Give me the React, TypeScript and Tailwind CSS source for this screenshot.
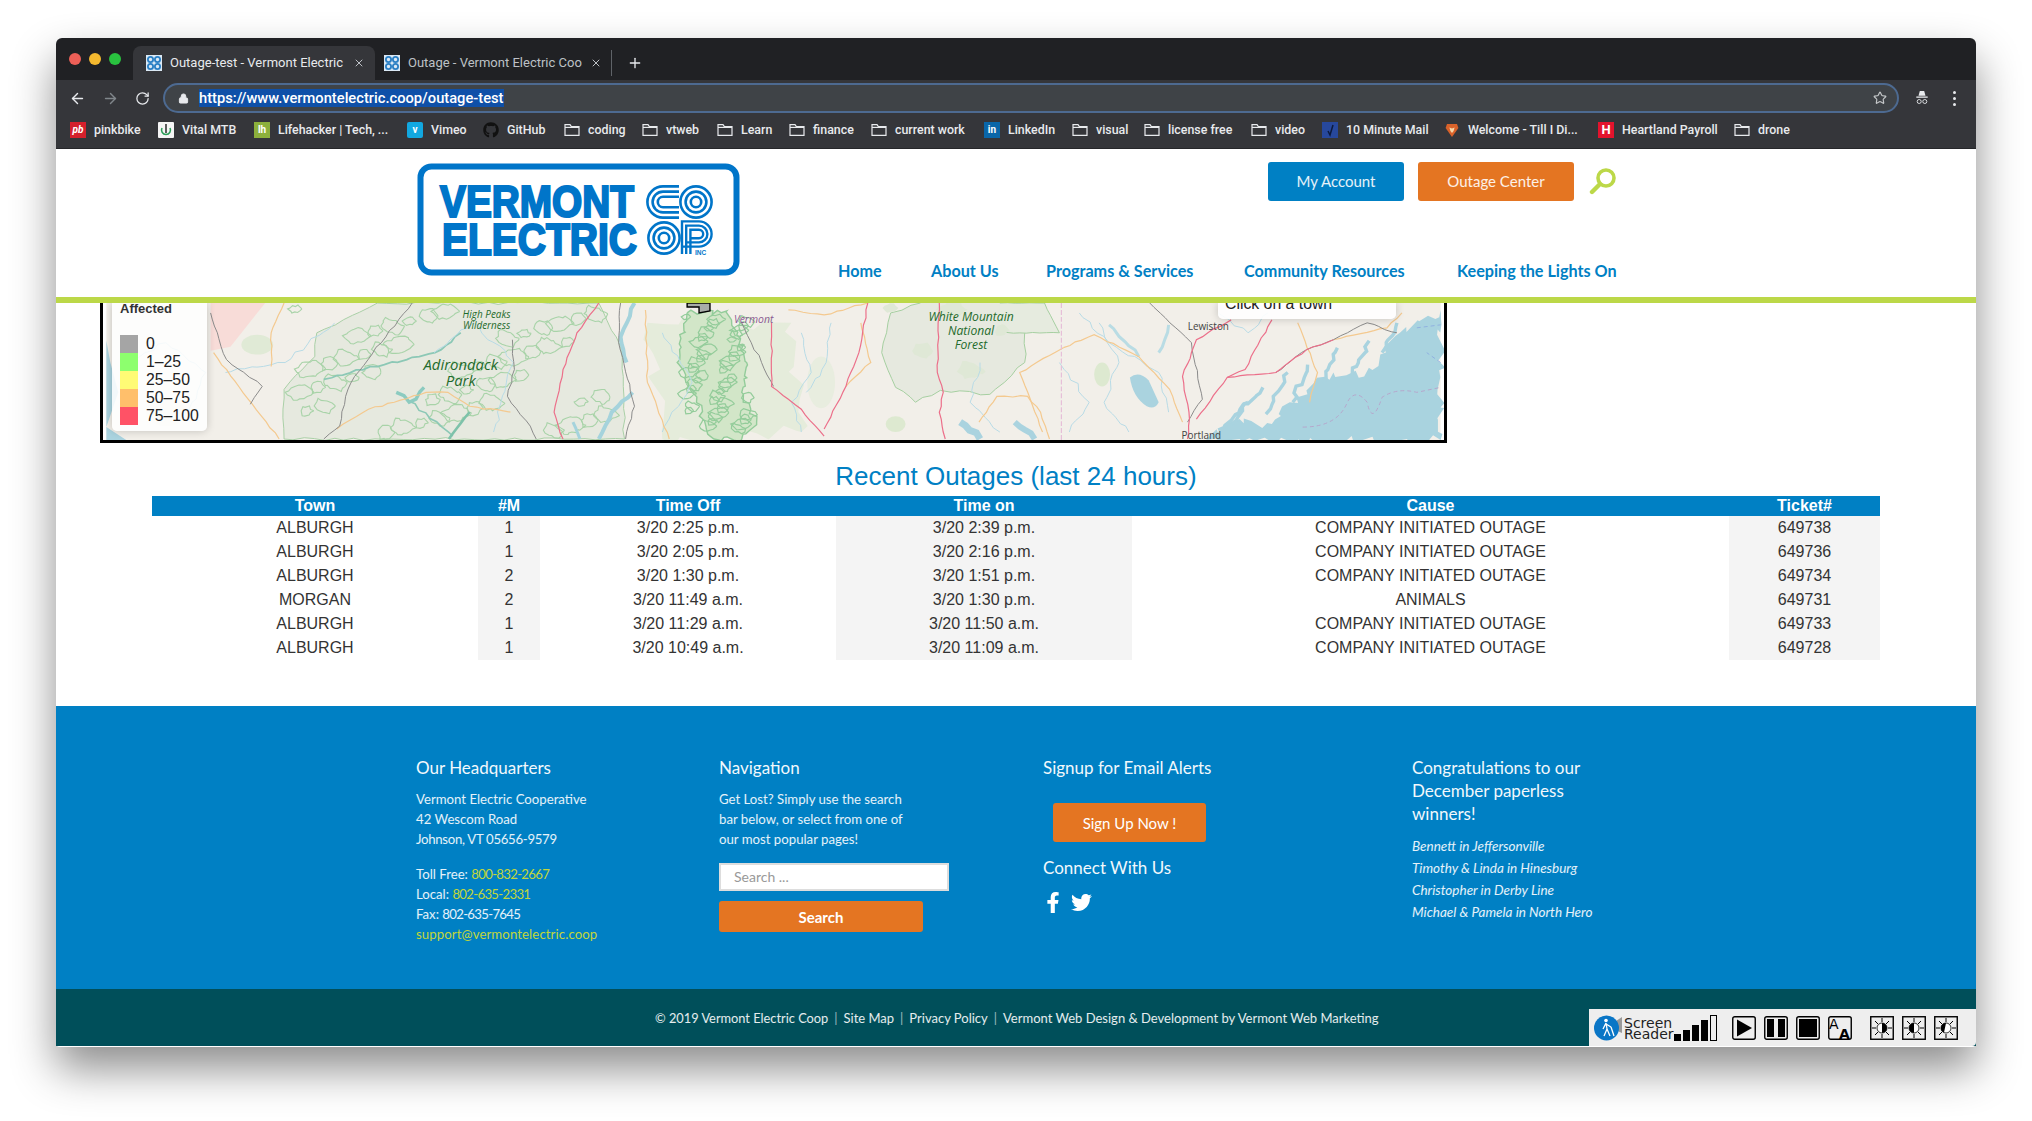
import React from "react";
import { ArrowLeft, ArrowRight, RotateCw, Lock, Star, Plus, X } from "lucide-react";
import { FaFacebookF, FaTwitter, FaGithub } from "react-icons/fa";

const SANS = "font-['Lato','Noto_Sans',sans-serif]";

const rows = [
  ["ALBURGH", "1", "3/20 2:25 p.m.", "3/20 2:39 p.m.", "COMPANY INITIATED OUTAGE", "649738"],
  ["ALBURGH", "1", "3/20 2:05 p.m.", "3/20 2:16 p.m.", "COMPANY INITIATED OUTAGE", "649736"],
  ["ALBURGH", "2", "3/20 1:30 p.m.", "3/20 1:51 p.m.", "COMPANY INITIATED OUTAGE", "649734"],
  ["MORGAN", "2", "3/20 11:49 a.m.", "3/20 1:30 p.m.", "ANIMALS", "649731"],
  ["ALBURGH", "1", "3/20 11:29 a.m.", "3/20 11:50 a.m.", "COMPANY INITIATED OUTAGE", "649733"],
  ["ALBURGH", "1", "3/20 10:49 a.m.", "3/20 11:09 a.m.", "COMPANY INITIATED OUTAGE", "649728"],
];

function randomFrom(seed: number) {
  let s = seed * 7919 + 13;
  return () => {
    s = (s * 16807) % 2147483647;
    return (s % 1000) / 1000;
  };
}

// jagged line between the points, so park edges and roads look hand traced
function wiggle(pts: number[][], amp: number, seed = 1, step = 7) {
  const r = randomFrom(seed);
  const rnd = () => r() * 2 - 1;
  let d = `M${pts[0][0]} ${pts[0][1]}`;
  for (let i = 1; i < pts.length; i++) {
    const [x0, y0] = pts[i - 1];
    const [x1, y1] = pts[i];
    const n = Math.max(1, Math.round(Math.hypot(x1 - x0, y1 - y0) / step));
    for (let k = 1; k <= n; k++) {
      const t = k / n;
      const j = k === n ? 0 : amp;
      d += `L${(x0 + (x1 - x0) * t + rnd() * j).toFixed(1)} ${(y0 + (y1 - y0) * t + rnd() * j).toFixed(1)}`;
    }
  }
  return d;
}

// scatter of small closed outlines (parcels of state land), spread evenly over the box
function parcels(count: number, x0: number, x1: number, y0: number, y1: number, size: number, seed: number) {
  const out: string[] = [];
  for (let i = 0; i < count; i++) {
    const cx = x0 + ((i * 0.618034 + seed * 0.13) % 1) * (x1 - x0);
    const cy = y0 + ((i * 0.754878 + seed * 0.07) % 1) * (y1 - y0);
    const rad = size * (0.6 + ((i * 37) % 10) / 12);
    const pts: number[][] = [];
    const sides = 6;
    for (let k = 0; k <= sides; k++) {
      const a = ((k % sides) / sides) * Math.PI * 2;
      const rr = rad * (k % sides === 0 ? 1 : 0.6 + ((i * 7 + k * 13) % 10) / 20);
      pts.push([cx + Math.cos(a) * rr * 1.3, cy + Math.sin(a) * rr]);
    }
    out.push(wiggle(pts, 1.4, seed + i + 1, 3.5));
  }
  return out;
}

const greyRoads = [
  [[105, 10], [121, 57], [157, 84], [145, 102]],
  [[308, 0], [277, 40], [250, 74], [241, 94], [235, 124], [219, 137]],
  [[409, 37], [411, 67], [404, 94], [427, 124], [433, 137]],
  [[518, 0], [516, 40], [532, 104], [523, 137]],
  [[1051, 0], [1093, 40], [1104, 97], [1089, 120]],
  [[1178, 70], [1209, 47], [1236, 37], [1270, 20], [1300, 30]],
  [[640, 20], [660, 60], [672, 84]],
];
const pinkRoads = [
  [[496, 0], [474, 30], [460, 67], [451, 110], [460, 137]],
  [[670, 20], [670, 84], [687, 97], [700, 107], [723, 134]],
  [[767, 0], [758, 50], [745, 84], [723, 127]],
  [[839, 0], [837, 70], [843, 90], [839, 110], [845, 137]],
  [[1133, 17], [1098, 37], [1084, 74], [1091, 117], [1089, 137]],
  [[1174, 17], [1147, 67], [1129, 75], [1098, 117]],
  [[1129, 75], [1178, 70], [1209, 47], [1236, 37]],
];
const orangeRoads = [
  [[964, 45], [995, 32], [1040, 54], [1071, 87], [1084, 120]],
  [[879, 120], [897, 94], [928, 94], [941, 110], [950, 137]],
  [[687, 7], [723, 12], [767, 0]],
  [[543, 7], [545, 80], [567, 137]],
  [[232, 127], [264, 107], [290, 100], [322, 90], [344, 90], [366, 104], [407, 110]],
  [[166, 64], [166, 30], [179, 0]],
  [[108, 50], [143, 97], [174, 137]],
  [[964, 45], [937, 60], [920, 70], [943, 130]],
  [[1200, 20], [1220, 70], [1212, 100]],
  [[1236, 37], [1290, 25], [1305, 10]],
  [[745, 84], [770, 60], [760, 20]],
];
const blueLines = [
  [[120, 70], [180, 60], [230, 20]],
  [[20, 60], [60, 40], [100, 70], [80, 120]],
  [[330, 50], [370, 20], [410, 60], [390, 130]],
  [[560, 30], [590, 80], [560, 130]],
  [[700, 30], [710, 70], [690, 100], [700, 130]],
  [[730, 20], [725, 60], [705, 90]],
  [[880, 60], [870, 100], [900, 130]],
  [[1000, 20], [1020, 60], [1005, 100], [1030, 130]],
  [[960, 60], [990, 100], [970, 130]],
  [[980, 10], [1010, 40], [1060, 70], [1070, 110]],
  [[1120, 10], [1150, 30], [1170, 10]],
];

const adirondackParcels = parcels(52, 190, 510, 6, 132, 9, 100);
const forestParcels = parcels(48, 584, 648, 14, 130, 6, 300);
const whiteMtnParcels = parcels(5, 790, 920, 5, 90, 10, 500);
const inlets = [
  [[1165, 85], [1130, 125]],
  [[1190, 70], [1168, 112]],
  [[1210, 62], [1195, 100]],
  [[1240, 45], [1225, 80]],
  [[1272, 38], [1255, 72]],
  [[1300, 20], [1285, 50]],
  [[1150, 100], [1120, 128]],
];

function MapArt() {
  return (
    <svg viewBox="0 0 1344 138" className="block w-full h-full">
      <rect width="1344" height="138" fill="#f2efe9" />
      {/* lake on the far left */}
      <path d="M0 38 L4 60 L12 90 L0 125 L20 138 L0 138Z" fill="#aad3df" />
      {/* hatched reserve */}
      <path d="M105 0H160L125 44L105 48Z" fill="#f8dcd8" />
      {/* light woods */}
      <ellipse cx="152" cy="42" rx="16" ry="10" fill="#e0ead6" />
      <ellipse cx="60" cy="110" rx="20" ry="14" fill="#e8ecdd" />
      <path d={wiggle([[545, 20], [690, 20], [700, 130], [560, 137], [545, 20]], 8, 201, 12)} fill="#e5ecdb" />
      <ellipse cx="720" cy="80" rx="14" ry="26" fill="#e8eddf" />
      <ellipse cx="1003" cy="72" rx="8" ry="12" fill="#dde9d0" />
      <ellipse cx="795" cy="122" rx="10" ry="8" fill="#dde9d0" />
      {/* park areas */}
      <path
        d={wiggle([[179, 137], [179, 87], [210, 54], [212, 30], [273, 0], [496, 0], [518, 44], [522, 137], [179, 137]], 1.5, 3, 10)}
        fill="#e6e9df"
        stroke="#a9d0a6"
        strokeWidth="1"
      />
      <path
        d={wiggle([[820, 0], [790, 10], [781, 50], [795, 85], [815, 100], [840, 88], [890, 92], [925, 60], [925, 30], [945, 0]], 1.5, 5, 10)}
        fill="#e6e9df"
        stroke="#a5cfa0"
        strokeWidth="1"
      />
      <path d={wiggle([[900, 0], [945, 0], [960, 30], [900, 30]], 0.5, 5)} fill="#e6ebdf" stroke="#a5cfa0" />
      {adirondackParcels.map((d, i) => (
        <path key={i} d={d} fill="none" stroke="#a8d3a8" strokeWidth="1.1" />
      ))}
      {whiteMtnParcels.map((d, i) => (
        <path key={i} d={d} fill="#dfe8d6" stroke="none" />
      ))}
      <path d={wiggle([[585, 10], [625, 8], [645, 60], [640, 90], [655, 120], [640, 137], [612, 137], [590, 90], [575, 60], [585, 10]], 3, 31, 4)} fill="#d2e6c8" stroke="#93cc9a" strokeWidth="1.4" />
      {forestParcels.map((d, i) => (
        <path key={i} d={d} fill="none" stroke="#93cc9a" strokeWidth="1.2" />
      ))}
      <path d={wiggle([[219, 77], [280, 62], [331, 50], [357, 30]], 1.5, 7)} stroke="#8cc8b6" strokeWidth="1.8" fill="none" />
      <path d={wiggle([[300, 94], [349, 134]], 1.5, 8)} stroke="#8cc8b6" strokeWidth="1.6" fill="none" />
      <path d={wiggle([[366, 110], [345, 137]], 1, 9)} stroke="#7ec2aa" strokeWidth="2.6" fill="none" />
      <path d={wiggle([[292, 90], [305, 100], [320, 85]], 2, 10)} stroke="#8ccbc0" strokeWidth="3.4" fill="none" />
      {/* lake champlain */}
      <path d={wiggle([[532, 0], [518, 34], [524, 60]], 1, 12)} stroke="#a5d3dc" strokeWidth="4" fill="none" />
      <path d={wiggle([[530, 90], [509, 110], [496, 137]], 1, 13)} stroke="#a5d3dc" strokeWidth="4" fill="none" />
      <path d={wiggle([[470, 120], [477, 137]], 1, 13)} stroke="#a5d3dc" strokeWidth="3" fill="none" />
      {/* maine lakes */}
      <path d="M1031 75 Q1040 68 1050 78 L1060 100 Q1056 108 1048 104 Q1034 95 1031 75Z" fill="#aad3df" />
      <path d={wiggle([[1010, 22], [1040, 54]], 1.5, 14)} stroke="#b9dce4" strokeWidth="3" fill="none" />
      <path d={wiggle([[1070, 22], [1060, 50]], 1.5, 15)} stroke="#b9dce4" strokeWidth="3" fill="none" />
      <path d={wiggle([[860, 120], [880, 137]], 2, 16)} stroke="#aad3df" strokeWidth="7" fill="none" />
      <path d={wiggle([[915, 120], [935, 137]], 2, 17)} stroke="#aad3df" strokeWidth="6" fill="none" />
      {/* sea */}
      <path
        d={wiggle([[1344, 7], [1303, 30], [1267, 74], [1236, 70], [1192, 100], [1174, 122], [1133, 120], [1108, 138], [1344, 138], [1344, 7]], 5, 19, 6)}
        fill="#a9d3df"
      />
      {inlets.map((p, i) => (
        <path key={i} d={wiggle(p, 2.5, i + 81, 5)} stroke="#a9d3df" strokeWidth="3.4" fill="none" />
      ))}
      <path d="M1205 125 Q1240 125 1250 100 Q1258 85 1270 100 Q1275 125 1285 95 Q1300 85 1320 90 L1344 85" fill="none" stroke="#b5a6cc" strokeWidth="1" strokeDasharray="4 3" />
      <path d="M1320 25 L1344 22 M1344 60 L1330 50" fill="none" stroke="#8fb0e0" strokeWidth="1" strokeDasharray="4 3" />
      {/* roads */}
      {blueLines.map((p, i) => (
        <path key={i} d={wiggle(p, 2, i + 41)} fill="none" stroke="#b7dbe6" strokeWidth="1" />
      ))}
      {orangeRoads.map((p, i) => (
        <path key={i} d={wiggle(p, 0.8, i + 51)} fill="none" stroke="#f4c98f" strokeWidth="1.2" />
      ))}
      {greyRoads.map((p, i) => (
        <path key={i} d={wiggle(p, 1, i + 61)} fill="none" stroke="#8a8a8a" strokeWidth="1" />
      ))}
      {pinkRoads.map((p, i) => (
        <path key={i} d={wiggle(p, 0.8, i + 71)} fill="none" stroke="#ec6f8a" strokeWidth="1.2" />
      ))}
      <path d="M962 0V138" stroke="#e6bfd8" strokeWidth="1.2" strokeDasharray="5 2" />
      {/* service town */}
      <path d="M585 0 L585 4 L597 4 L597 10 L608 8 L608 0Z" fill="#a8aca8" stroke="#000" strokeWidth="1.4" />
      {/* labels */}
      <g fontFamily="'Open Sans','Noto Sans',sans-serif" fontStyle="italic" textAnchor="middle" fill="#1f6b2c">
        <text x="383" y="15" fontSize="10">High Peaks</text>
        <text x="383" y="26" fontSize="10">Wilderness</text>
        <text x="357" y="67" fontSize="15">Adirondack</text>
        <text x="357" y="84" fontSize="15">Park</text>
        <text x="871" y="18" fontSize="12.2">White Mountain</text>
        <text x="871" y="32" fontSize="12.2">National</text>
        <text x="871" y="46" fontSize="12.2">Forest</text>
        <text x="652" y="20" fontSize="10.5" fill="#8a5a92">Vermont</text>
      </g>
      <g fontFamily="'Open Sans','Noto Sans',sans-serif" fontSize="10" textAnchor="middle" fill="#444">
        <text x="1110" y="27">Lewiston</text>
        <text x="1103" y="137">Portland</text>
      </g>
    </svg>
  );
}

function Logo() {
  const blue = "#0075c9";
  // concentric strokes of the CO OP mark
  const rings = (cx: number, cy: number) =>
    [15.6, 10.4, 5.2].map((r) => <circle key={r} cx={cx} cy={cy} r={r} fill="none" stroke={blue} strokeWidth="2.6" />);
  const cee = (cx: number, cy: number) =>
    [15.6, 10.4, 5.2].map((r) => (
      <path key={r} d={`M${cx + 16} ${cy - r}H${cx}A${r} ${r} 0 0 0 ${cx} ${cy + r}H${cx + 16}`} fill="none" stroke={blue} strokeWidth="2.6" />
    ));
  const pee = [12.6, 8.4, 4.2].map((r) => (
    <path key={r} d={`M${277.6 - r} 91V${71 - r}H282A${r} ${r} 0 0 1 282 ${71 + r}H${277.6 - r}`} fill="none" stroke={blue} strokeWidth="2.4" />
  ));
  return (
    <svg viewBox="0 0 323 113" className="w-[323px] h-[113px] block">
      <rect x="3.5" y="3.5" width="316" height="106" rx="11" fill="#fff" stroke={blue} strokeWidth="6" />
      <g fontFamily="'Liberation Sans',Arial,sans-serif" fontWeight="700" fill={blue} stroke={blue} strokeWidth="2.2">
        <text x="23" y="54" fontSize="44" textLength="194" lengthAdjust="spacingAndGlyphs">VERMONT</text>
        <text x="25" y="92" fontSize="44" textLength="195" lengthAdjust="spacingAndGlyphs">ELECTRIC</text>
      </g>
      {cee(246, 39)}
      {rings(279, 39)}
      {rings(247, 75)}
      {pee}
      <text x="278" y="92" fontSize="6.5" fontWeight="700" fontFamily="'Liberation Sans',sans-serif" fill={blue}>INC</text>
    </svg>
  );
}

function TabIcon() {
  return (
    <svg viewBox="0 0 16 16" className="w-4 h-4 shrink-0">
      <rect width="16" height="16" fill="#dbe9f5" />
      {[[4.5, 4.5], [11.5, 4.5], [4.5, 11.5], [11.5, 11.5]].map(([x, y], i) => (
        <circle key={i} cx={x} cy={y} r="2.6" fill="none" stroke="#2a7fc4" strokeWidth="1.8" />
      ))}
    </svg>
  );
}

function FolderIcon() {
  return (
    <svg viewBox="0 0 16 14" className="w-4 h-[14px] shrink-0" fill="none" stroke="#e8eaed" strokeWidth="1.2">
      <path d="M1 12.4V1.6h5l1.4 2H15v8.8z" />
      <path d="M1 4.4h14" />
    </svg>
  );
}

function Mark({ bg, text, className = "" }: { bg: string; text: string; className?: string }) {
  return (
    <span className={`w-4 h-4 shrink-0 flex items-center justify-center text-white text-[10px] font-bold leading-none ${bg} ${className}`}>
      {text}
    </span>
  );
}

const bookmarks: { label: string; icon: React.ReactNode; width: string }[] = [
  { label: "pinkbike", width: "w-[88px]", icon: <Mark bg="bg-[#d4202c]" text="pb" className="italic" /> },
  {
    label: "Vital MTB",
    width: "w-[96px]",
    icon: (
      <svg viewBox="0 0 16 16" className="w-4 h-4 shrink-0">
        <rect width="16" height="16" rx="1" fill="#f5f5f5" />
        <path d="M4 6a4.5 4.5 0 1 0 8 0" fill="none" stroke="#2a9d58" strokeWidth="1.6" />
        <path d="M8 2v9" stroke="#1d1d1d" strokeWidth="1.4" />
      </svg>
    ),
  },
  { label: "Lifehacker | Tech, ...", width: "w-[153px]", icon: <Mark bg="bg-[#8cb03c]" text="lh" /> },
  { label: "Vimeo", width: "w-[76px]", icon: <Mark bg="bg-[#12a8e0] rounded-[2px]" text="v" /> },
  { label: "GitHub", width: "w-[81px]", icon: <FaGithub className="w-4 h-4 shrink-0 text-[#111]" /> },
  { label: "coding", width: "w-[78px]", icon: <FolderIcon /> },
  { label: "vtweb", width: "w-[75px]", icon: <FolderIcon /> },
  { label: "Learn", width: "w-[72px]", icon: <FolderIcon /> },
  { label: "finance", width: "w-[82px]", icon: <FolderIcon /> },
  { label: "current work", width: "w-[113px]", icon: <FolderIcon /> },
  { label: "LinkedIn", width: "w-[88px]", icon: <Mark bg="bg-[#0a66a8]" text="in" /> },
  { label: "visual", width: "w-[72px]", icon: <FolderIcon /> },
  { label: "license free", width: "w-[107px]", icon: <FolderIcon /> },
  { label: "video", width: "w-[71px]", icon: <FolderIcon /> },
  {
    label: "10 Minute Mail",
    width: "w-[122px]",
    icon: (
      <svg viewBox="0 0 16 16" className="w-4 h-4 shrink-0">
        <rect width="16" height="16" fill="#27489c" />
        <path d="M6 9l2 4 3-10" fill="none" stroke="#0c1a3d" strokeWidth="1.5" />
      </svg>
    ),
  },
  {
    label: "Welcome - Till I Di...",
    width: "w-[154px]",
    icon: (
      <svg viewBox="0 0 16 16" className="w-4 h-4 shrink-0">
        <path d="M3 2h10l1.4 4L8 15 1.6 6z" fill="#d9622a" />
        <path d="M5.4 5.4l2.6 1 2.6-1L9.6 9 8 11 6.4 9z" fill="#f6d6a8" />
      </svg>
    ),
  },
  { label: "Heartland Payroll", width: "w-[136px]", icon: <Mark bg="bg-[#e3132d]" text="H" className="text-[13px]" /> },
  { label: "drone", width: "w-[60px]", icon: <FolderIcon /> },
];

function BrowserChrome() {
  return (
    <div className="font-['Roboto',sans-serif] text-[#e8eaed]">
      <div className="h-[42px] bg-[#202124] rounded-t-[6px] flex items-end">
        <div className="flex items-center gap-2 pl-[13px] w-[77px] h-full pb-[1px]">
          <span className="w-3 h-3 rounded-full bg-[#ed5f57]" />
          <span className="w-3 h-3 rounded-full bg-[#f4b92f]" />
          <span className="w-3 h-3 rounded-full bg-[#29c23f]" />
        </div>
        <div className="w-[242px] h-[34px] bg-[#35363a] rounded-t-[8px] flex items-center pl-[13px] pr-[10px] gap-2">
          <TabIcon />
          <span className="flex-1 text-[13px] whitespace-nowrap overflow-hidden">Outage-test - Vermont Electric</span>
          <X className="w-3 h-3 text-[#bdc1c6]" />
        </div>
        <div className="w-[237px] h-[26px] flex items-center pl-[9px] pr-[9px] gap-2 border-r border-[#5f6368] mb-[4px]">
          <TabIcon />
          <span className="flex-1 text-[13px] whitespace-nowrap overflow-hidden text-[#bdc1c6]">Outage - Vermont Electric Coop</span>
          <X className="w-3 h-3 text-[#bdc1c6]" />
        </div>
        <Plus className="w-4 h-4 ml-[15px] mb-[9px] text-[#e8eaed]" />
      </div>
      <div className="h-[38px] bg-[#35363a] flex items-center pb-[2px]">
        <div className="w-[107px] flex items-center pl-[13px] gap-[16px]">
          <ArrowLeft className="w-[17px] h-[17px]" />
          <ArrowRight className="w-[17px] h-[17px] text-[#80868b]" />
          <RotateCw className="w-[15px] h-[15px]" />
        </div>
        <div className="w-[1736px] h-[30px] rounded-full bg-[#3f4347] border-2 border-[#4d6a91] flex items-center pl-[13px] pr-[10px]">
          <Lock className="w-[11px] h-[11px] fill-[#e8eaed] text-[#e8eaed]" />
          <span className="ml-[10px] bg-[#0f50a8] text-white text-[14.7px] font-medium leading-[18px] whitespace-nowrap">
            https://www.vermontelectric.coop/outage-test
          </span>
          <Star className="w-[14px] h-[14px] ml-auto text-[#c4c7c9]" />
        </div>
        <svg viewBox="0 0 16 18" className="w-[14px] h-[16px] ml-[16px]" fill="none" stroke="#e8eaed">
          <path d="M4 6.5L5.5 1h5L12 6.5z" fill="#e8eaed" stroke="none" />
          <path d="M1.5 8h13" strokeWidth="1.5" />
          <circle cx="4.8" cy="13" r="2.3" />
          <circle cx="11.2" cy="13" r="2.3" />
        </svg>
        <div className="flex flex-col gap-[3px] ml-[24px]">
          <span className="w-[3px] h-[3px] rounded-full bg-[#e8eaed]" />
          <span className="w-[3px] h-[3px] rounded-full bg-[#e8eaed]" />
          <span className="w-[3px] h-[3px] rounded-full bg-[#e8eaed]" />
        </div>
      </div>
      <div className="h-[31px] bg-[#35363a] border-b border-[#26272a] flex items-center pb-[6px] pl-[14px] text-[12.4px] font-medium">
        {bookmarks.map((b) => (
          <div key={b.label} className={`flex items-center gap-2 shrink-0 ${b.width}`}>
            {b.icon}
            <span className="whitespace-nowrap">{b.label}</span>
          </div>
        ))}
      </div>
    </div>
  );
}

function SiteHeader() {
  const nav = [
    ["Home", "w-[93px]"],
    ["About Us", "w-[115px]"],
    ["Programs & Services", "w-[198px]"],
    ["Community Resources", "w-[213px]"],
    ["Keeping the Lights On", ""],
  ];
  return (
    <div className="h-[154px] bg-white border-b-[6px] border-[#bcd848] flex">
      <div className="pl-[361px] pt-[14px] w-[782px]">
        <Logo />
      </div>
      <div className={`${SANS}`}>
        <div className="flex items-center pt-[13px] pl-[430px]">
          <a className="w-[136px] h-[39px] rounded-[3px] bg-[#0080c4] text-white/90 text-[15px] flex items-center justify-center">My Account</a>
          <a className="w-[156px] h-[39px] rounded-[3px] bg-[#e47522] text-white/90 text-[15px] flex items-center justify-center ml-[14px]">Outage Center</a>
          <svg viewBox="0 0 28 28" className="w-[28px] h-[28px] ml-[15px] mt-[-1px]" fill="none" stroke="#bcd848">
            <circle cx="17" cy="11" r="8" strokeWidth="3.6" />
            <path d="M11 17L3 25" strokeWidth="4.4" strokeLinecap="round" />
          </svg>
        </div>
        <div className="flex mt-[58px] text-[16.2px] font-bold text-[#0080c4] leading-6 whitespace-nowrap">
          {nav.map(([n, w]) => (
            <span key={n} className={`shrink-0 ${w}`}>{n}</span>
          ))}
        </div>
      </div>
    </div>
  );
}

function MapPanel() {
  const legend = [
    ["0", "bg-[#a5a5a5]"],
    ["1–25", "bg-[#8dff6e]"],
    ["25–50", "bg-[#fffb75]"],
    ["50–75", "bg-[#ffbf6b]"],
    ["75–100", "bg-[#ff5266]"],
  ];
  return (
    <div className="h-[140px] pl-[44px] overflow-hidden">
      <div className="relative w-[1347px] h-[140px] border-x-[3px] border-b-[3px] border-black overflow-hidden font-['Liberation_Sans',Arial,sans-serif]">
        <MapArt />
        <div className="absolute left-[9px] top-0 w-[95px] h-[128px] bg-white/85 rounded-b-[5px] shadow-[0_0_8px_rgba(0,0,0,0.2)] pl-[8px] text-[#222]">
          <div className="text-[13px] font-bold text-[#333] leading-[16px] mt-[-2px]">Affected</div>
          <div className="mt-[18px]">
            {legend.map(([t, c]) => (
              <div key={t} className="flex h-[18px] items-center text-[15.8px] leading-none">
                <span className={`w-[18px] h-[18px] mr-[8px] ${c}`} />
                {t}
              </div>
            ))}
          </div>
        </div>
        <div className="absolute left-[1115px] top-0 w-[178px] h-[16px] bg-white/90 rounded-b-[5px] shadow-[0_0_8px_rgba(0,0,0,0.2)] pl-[7px] text-[15.8px] leading-[2px] text-[#222] overflow-hidden">
          Click on a town
        </div>
      </div>
    </div>
  );
}

function OutageTable() {
  const head = ["Town", "#M", "Time Off", "Time on", "Cause", "Ticket#"];
  return (
    <div className="font-['Liberation_Sans',Arial,sans-serif]">
      <h2 className="text-center text-[#0080c4] text-[26px] leading-[36px] mt-[15px] mb-[2px]">Recent Outages (last 24 hours)</h2>
      <table className="ml-[96px] w-[1728px] table-fixed border-collapse text-center text-[16px] text-[#333]">
        <colgroup>
          <col className="w-[326px]" />
          <col className="w-[62px]" />
          <col className="w-[296px]" />
          <col className="w-[296px]" />
          <col className="w-[597px]" />
          <col className="w-[151px]" />
        </colgroup>
        <thead>
          <tr className="bg-[#0080c4] text-white h-[20px] leading-[20px]">
            {head.map((h) => (
              <th key={h} className="p-0 font-bold">{h}</th>
            ))}
          </tr>
        </thead>
        <tbody>
          {rows.map((r, i) => (
            <tr key={i} className="h-[24px] leading-[24px]">
              {r.map((c, j) => (
                <td key={j} className={j % 2 === 1 ? "p-0 bg-[#f4f4f4]" : "p-0"}>{c}</td>
              ))}
            </tr>
          ))}
        </tbody>
      </table>
    </div>
  );
}

function SiteFooter() {
  const h4 = "text-[17px] leading-6 text-[#f2f8fc]";
  const green = "text-[#c2d63a]";
  const digits = "tracking-[-0.7px]";
  return (
    <div className={`${SANS} mt-[46px]`}>
      <div className="h-[283px] bg-[#0080c4] pl-[360px] pt-[50px] text-white/90 text-[13.2px] leading-5 grid grid-cols-[303px_324px_369px_1fr]">
        <div>
          <h4 className={h4}>Our Headquarters</h4>
          <p className="mt-[9px]">
            Vermont Electric Cooperative<br />42 Wescom Road<br />
            <span className="tracking-[-0.3px]">Johnson, VT 05656-9579</span>
          </p>
          <p className="mt-[15px]">
            Toll Free: <span className={`${green} ${digits}`}>800-832-2667</span><br />
            Local: <span className={`${green} ${digits}`}>802-635-2331</span><br />
            Fax: <span className={digits}>802-635-7645</span><br />
            <span className={`${green} tracking-[0.1px]`}>support@vermontelectric.coop</span>
          </p>
        </div>
        <div>
          <h4 className={h4}>Navigation</h4>
          <p className="mt-[9px]">Get Lost? Simply use the search<br />bar below, or select from one of<br />our most popular pages!</p>
          <div className="mt-[14px] w-[230px] h-[28px] bg-white border-2 border-[#ddd] pl-[13px] text-[14px] leading-[24px] text-[#999]">Search ...</div>
          <button className="mt-[10px] w-[204px] h-[31px] rounded-[3px] bg-[#e47522] text-white text-[15px] font-bold flex items-center justify-center">Search</button>
        </div>
        <div>
          <h4 className={h4}>Signup for Email Alerts</h4>
          <button className="ml-[10px] mt-[23px] w-[153px] h-[39px] rounded-[3px] bg-[#e47522] text-white text-[15px] flex items-center justify-center">Sign Up Now !</button>
          <h4 className={`${h4} mt-[14px]`}>Connect With Us</h4>
          <div className="flex items-center mt-[12px] gap-[8px]">
            <FaFacebookF className="w-[20px] h-[21px] text-white" />
            <FaTwitter className="w-[21px] h-[21px] text-white" />
          </div>
        </div>
        <div>
          <h4 className="text-[17px] leading-[23px] text-[#f2f8fc]">Congratulations to our<br />December paperless<br />winners!</h4>
          <p className="mt-[10px] italic text-[13.5px] leading-[22px]">
            Bennett in Jeffersonville<br />
            Timothy &amp; Linda in Hinesburg<br />
            Christopher in Derby Line<br />
            Michael &amp; Pamela in North Hero
          </p>
        </div>
      </div>
      <div className="h-[57px] bg-[#004f5a] relative flex items-start pl-[599px] pt-[18px] text-white/90 text-[13px] leading-[22px] whitespace-nowrap">
        <span className="text-[12.8px]">© 2019 Vermont Electric Coop</span>
        <span className="mx-[6px] text-white/60">|</span>
        <span>Site Map</span>
        <span className="mx-[6px] text-white/60">|</span>
        <span>Privacy Policy</span>
        <span className="mx-[6px] text-white/60">|</span>
        <span>Vermont Web Design &amp; Development by Vermont Web Marketing</span>
        <ScreenReader />
      </div>
    </div>
  );
}

function SrButton({ children, sharp }: { children: React.ReactNode; sharp?: boolean }) {
  return (
    <svg viewBox="0 0 24 24" className="w-[24px] h-[24px] shrink-0">
      <rect x="0.75" y="0.75" width="22.5" height="22.5" rx={sharp ? 0 : 2} fill="#eee" stroke="#000" strokeWidth="1.4" />
      {children}
    </svg>
  );
}

function Sun({ shade }: { shade: string }) {
  return (
    <g stroke="#000" strokeWidth="1">
      <path d="M12 2v4M12 18v4M2 12h4M18 12h4M5 5l3 3M16 16l3 3M19 5l-3 3M8 16l-3 3" />
      <circle cx="12" cy="12" r="5" fill="#fff" strokeWidth="0.8" />
      <path d={shade} fill="#000" stroke="none" />
    </g>
  );
}

function ScreenReader() {
  return (
    <div className="absolute right-0 bottom-0 w-[387px] h-[37px] bg-[#eee] rounded-br-[4px] flex items-center pl-[4px] font-['DejaVu_Sans',sans-serif] text-[#222]">
      <svg viewBox="0 0 30 28" className="w-[30px] h-[28px] shrink-0">
        <path d="M20 9l9-6v16l-9-4z" fill="#9a9a9a" />
        <circle cx="13.5" cy="14" r="12.5" fill="#0a76c6" />
        <circle cx="13" cy="6.5" r="1.8" fill="#fff" />
        <path d="M13 9l-3 6M13 9l1 6-3 7M14 15l3 7M13 10l5 3M18 13l3 9" stroke="#fff" strokeWidth="1.3" fill="none" />
      </svg>
      <div className="text-[14px] leading-[11px] ml-[1px] mt-[2px] w-[49px]">Screen<br />Reader</div>
      <div className="flex items-end gap-[2px] h-[26px] w-[56px] ml-[1px]">
        <span className="w-[7px] h-[7px] bg-black" />
        <span className="w-[7px] h-[11px] bg-black" />
        <span className="w-[7px] h-[16px] bg-black" />
        <span className="w-[7px] h-[21px] bg-black" />
        <span className="w-[7px] h-[26px] border border-black" />
      </div>
      <div className="flex gap-[8px] ml-[2px]">
        <SrButton><path d="M5 3.5L20 12 5 20.5z" fill="#000" /></SrButton>
        <SrButton><path d="M3 3h7v18H3zM14 3h7v18h-7z" fill="#000" /></SrButton>
        <SrButton><path d="M3 3h18v18H3z" fill="#000" /></SrButton>
        <SrButton>
          <text x="1" y="13" fontSize="14" fontFamily="'DejaVu Sans',sans-serif">A</text>
          <text x="11" y="23" fontSize="14" fontWeight="700" fontFamily="'DejaVu Sans',sans-serif">A</text>
        </SrButton>
      </div>
      <div className="flex gap-[8px] ml-[18px]">
        <SrButton sharp><Sun shade="M12 7a5 5 0 0 1 0 10z" /></SrButton>
        <SrButton sharp><Sun shade="M12 7a5 5 0 0 0 0 10z" /></SrButton>
        <SrButton sharp><Sun shade="M12 7a5 5 0 0 0-2 9.6z" /></SrButton>
      </div>
    </div>
  );
}

export default function App() {
  return (
    <div className="w-[2032px] h-[1121px] bg-white pt-[38px] pl-[56px] overflow-hidden">
      <div className="w-[1920px] h-[1009px] bg-white rounded-t-[6px] rounded-b-[4px] shadow-[0_22px_44px_rgba(0,0,0,0.45)]">
        <BrowserChrome />
        <SiteHeader />
        <MapPanel />
        <OutageTable />
        <SiteFooter />
      </div>
    </div>
  );
}
